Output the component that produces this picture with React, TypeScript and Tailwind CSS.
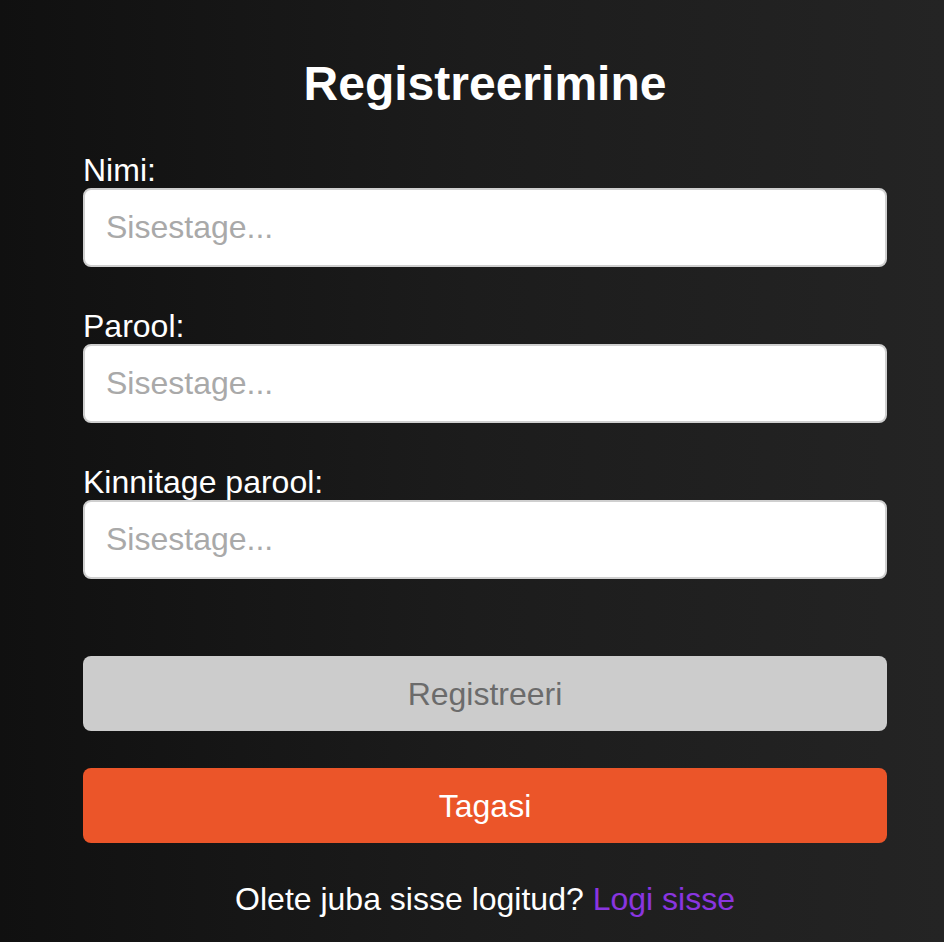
export default function App() {
  return (
    <div className="min-h-screen w-full bg-gradient-to-r from-[#101010] via-[#1c1c1c] to-[#242424] font-['Liberation_Sans',Arial,sans-serif] text-white">
      <div className="ml-[83px] flex w-[804px] flex-col pt-[56px] pb-[25px]">
        <h1 className="text-center text-[48px] font-bold leading-[56px]">Registreerimine</h1>

        <form className="mt-[40px] flex flex-col" onSubmit={(e) => e.preventDefault()}>
          <label className="text-[32px] leading-[36px]">Nimi:</label>
          <input
            type="text"
            placeholder="Sisestage..."
            className="h-[79px] w-full rounded-lg border-2 border-[#cfcfcf] bg-white px-[21px] text-[32px] text-black outline-none placeholder:text-[#a9a9a9]"
          />

          <label className="mt-[41px] text-[32px] leading-[36px]">Parool:</label>
          <input
            type="password"
            placeholder="Sisestage..."
            className="h-[79px] w-full rounded-lg border-2 border-[#cfcfcf] bg-white px-[21px] text-[32px] text-black outline-none placeholder:text-[#a9a9a9]"
          />

          <label className="mt-[41px] text-[32px] leading-[36px]">Kinnitage parool:</label>
          <input
            type="password"
            placeholder="Sisestage..."
            className="h-[79px] w-full rounded-lg border-2 border-[#cfcfcf] bg-white px-[21px] text-[32px] text-black outline-none placeholder:text-[#a9a9a9]"
          />

          <button
            type="submit"
            disabled
            className="mt-[77px] h-[75px] w-full rounded-lg bg-[#cccccc] text-[32px] text-[#6b6b6b]"
          >
            Registreeri
          </button>
          <button type="button" className="mt-[37px] h-[75px] w-full rounded-lg bg-[#eb5529] text-[32px] text-white">
            Tagasi
          </button>
        </form>

        <p className="mt-[38px] text-center text-[32px] leading-[36px]">
          Olete juba sisse logitud? <a href="#" className="text-[#8a35e0]">Logi sisse</a>
        </p>
      </div>
    </div>
  );
}
